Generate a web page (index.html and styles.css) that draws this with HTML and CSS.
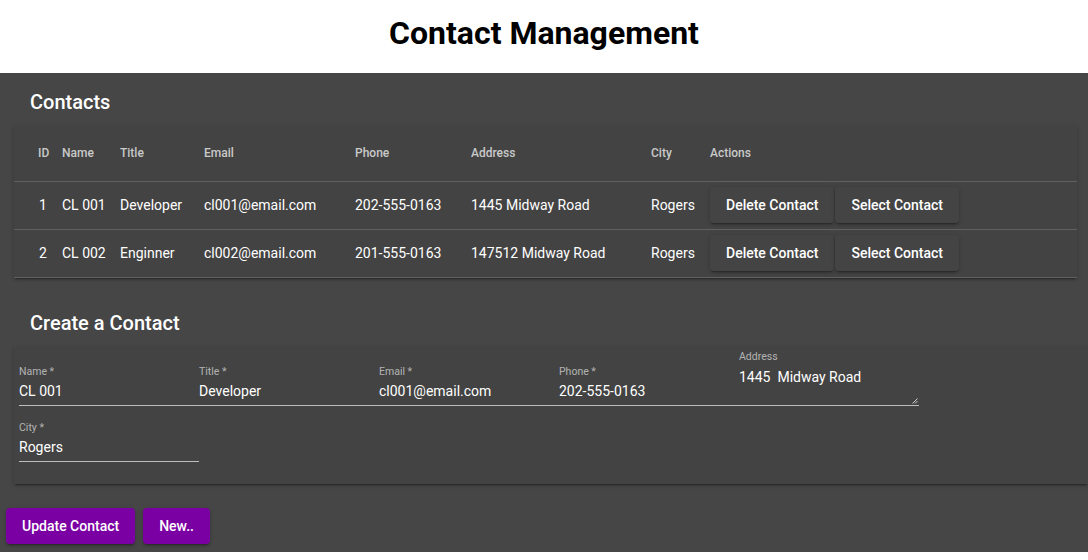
FILE: index.html
```html
<!DOCTYPE html>
<html lang="en">
<head>
<meta charset="utf-8">
<title>Contact Management</title>
<link rel="stylesheet" href="styles.css">
</head>
<body>
<header class="top">
  <h1 class="title">Contact Management</h1>
</header>
<main class="main">
  <h2 class="section-title">Contacts</h2>
  <div class="card table-card">
    <table class="contacts">
      <colgroup>
        <col class="c-id"><col class="c-name"><col class="c-title"><col class="c-email">
        <col class="c-phone"><col class="c-address"><col class="c-city"><col class="c-actions">
      </colgroup>
      <thead>
        <tr>
          <th class="id">ID</th><th>Name</th><th>Title</th><th>Email</th>
          <th>Phone</th><th>Address</th><th>City</th><th>Actions</th>
        </tr>
      </thead>
      <tbody>
        <tr>
          <td class="id">1</td><td>CL 001</td><td>Developer</td><td>cl001@email.com</td>
          <td>202-555-0163</td><td>1445 Midway Road</td><td>Rogers</td>
          <td class="actions"><button class="btn raised">Delete Contact</button><button class="btn raised">Select Contact</button></td>
        </tr>
        <tr>
          <td class="id">2</td><td>CL 002</td><td>Enginner</td><td>cl002@email.com</td>
          <td>201-555-0163</td><td>147512 Midway Road</td><td>Rogers</td>
          <td class="actions"><button class="btn raised">Delete Contact</button><button class="btn raised">Select Contact</button></td>
        </tr>
      </tbody>
    </table>
  </div>

  <h2 class="section-title second">Create a Contact</h2>
  <div class="card form-card">
    <div class="fields">
      <label class="field">
        <span class="label">Name *</span>
        <input class="input" value="CL 001">
      </label>
      <label class="field">
        <span class="label">Title *</span>
        <input class="input" value="Developer">
      </label>
      <label class="field">
        <span class="label">Email *</span>
        <input class="input" value="cl001@email.com">
      </label>
      <label class="field">
        <span class="label">Phone *</span>
        <input class="input" value="202-555-0163">
      </label>
      <label class="field field-area">
        <span class="label">Address</span>
        <span class="area">1445&nbsp; Midway Road</span>
        <svg class="grip" width="6" height="6" viewBox="0 0 6 6"><path d="M5.5 0.5 L0.5 5.5 M5.5 3 L3 5.5" stroke="#cfcfcf" stroke-width="1" fill="none"/></svg>
      </label>
    </div>
    <div class="fields row2">
      <label class="field">
        <span class="label">City *</span>
        <input class="input" value="Rogers">
      </label>
    </div>
  </div>

  <div class="form-actions">
    <button class="btn primary">Update Contact</button>
    <button class="btn primary">New..</button>
  </div>
</main>
</body>
</html>
```

FILE: styles.css
```css
* { box-sizing: border-box; }

html, body {
  margin: 0;
  padding: 0;
  background: #ffffff;
  font-family: Roboto, "Noto Sans", "Liberation Sans", sans-serif;
}

.top {
  height: 73px;
  background: #ffffff;
}

.title {
  margin: 0;
  padding-top: 14px;
  line-height: 38px;
  font-size: 32px;
  font-weight: 700;
  text-align: center;
  color: #000;
}

.main {
  background: #464646;
  padding-bottom: 8px;
  color: #fff;
}

.section-title {
  margin: 0;
  padding: 16px 30px 11px;
  font-size: 20px;
  line-height: 26px;
  font-weight: 500;
  color: #fff;
}

.section-title.second {
  padding-top: 32px;
}

.card {
  background: #434343;
  box-shadow: 0 3px 1px -2px rgba(0,0,0,.2), 0 2px 2px 0 rgba(0,0,0,.14), 0 1px 5px 0 rgba(0,0,0,.12);
}

.table-card {
  margin: 0 11px 0 14px;
}

.contacts {
  width: 100%;
  border-collapse: collapse;
  table-layout: fixed;
}

.c-id { width: 48px; }
.c-name { width: 58px; }
.c-title { width: 84px; }
.c-email { width: 151px; }
.c-phone { width: 116px; }
.c-address { width: 180px; }
.c-city { width: 59px; }

.contacts th,
.contacts td {
  padding: 0;
  text-align: left;
  border-bottom: 1px solid rgba(255,255,255,.16);
  white-space: nowrap;
}

.contacts th {
  height: 55px;
  font-size: 12px;
  font-weight: 500;
  color: rgba(255,255,255,.72);
}

.contacts td {
  height: 47px;
  font-size: 14px;
  color: #fff;
}

.contacts .id {
  padding-left: 24px;
}

.contacts td.id {
  padding-left: 25px;
}

.actions {
  display: flex;
  align-items: center;
  gap: 1px;
}

.contacts td.actions {
  height: 48px;
  display: table-cell;
}

.btn {
  height: 36px;
  padding: 0 16px;
  border: none;
  border-radius: 4px;
  font-family: Roboto, "Noto Sans", "Liberation Sans", sans-serif;
  font-size: 14px;
  font-weight: 500;
  color: #fff;
  cursor: pointer;
}

.raised {
  background: #444444;
  margin-right: 1px;
  box-shadow: 0 3px 1px -2px rgba(0,0,0,.2), 0 2px 2px 0 rgba(0,0,0,.14), 0 1px 5px 0 rgba(0,0,0,.12);
}

.form-card {
  margin-left: 14px;
  padding: 3px 0 22px 5px;
}

.fields {
  display: flex;
  align-items: flex-end;
}

.fields.row2 {
  margin-top: 15px;
}

.field {
  width: 180px;
  display: flex;
  flex-direction: column;
  border-bottom: 1px solid #bdbdbd;
  padding-bottom: 5px;
  position: relative;
}

.label {
  font-size: 10.5px;
  line-height: 14px;
  color: rgba(255,255,255,.6);
  margin-bottom: 3px;
}

.input {
  display: block;
  width: 100%;
  height: 18px;
  padding: 0;
  margin: 0;
  border: none;
  outline: none;
  background: transparent;
  color: #fff;
  font-family: Roboto, "Noto Sans", "Liberation Sans", sans-serif;
  font-size: 14px;
  line-height: 18px;
}

.field-area {
  padding-bottom: 0;
}

.field-area .label {
  margin-bottom: 4px;
}

.area {
  display: block;
  height: 37px;
  font-size: 14px;
  line-height: 18px;
  color: #fff;
}

.grip {
  position: absolute;
  right: 1px;
  bottom: 1px;
}

.form-actions {
  display: flex;
  gap: 8px;
  padding: 24px 0 0 6px;
}

.primary {
  background: #7b00a3;
  box-shadow: 0 3px 1px -2px rgba(0,0,0,.2), 0 2px 2px 0 rgba(0,0,0,.14), 0 1px 5px 0 rgba(0,0,0,.12);
}
```
